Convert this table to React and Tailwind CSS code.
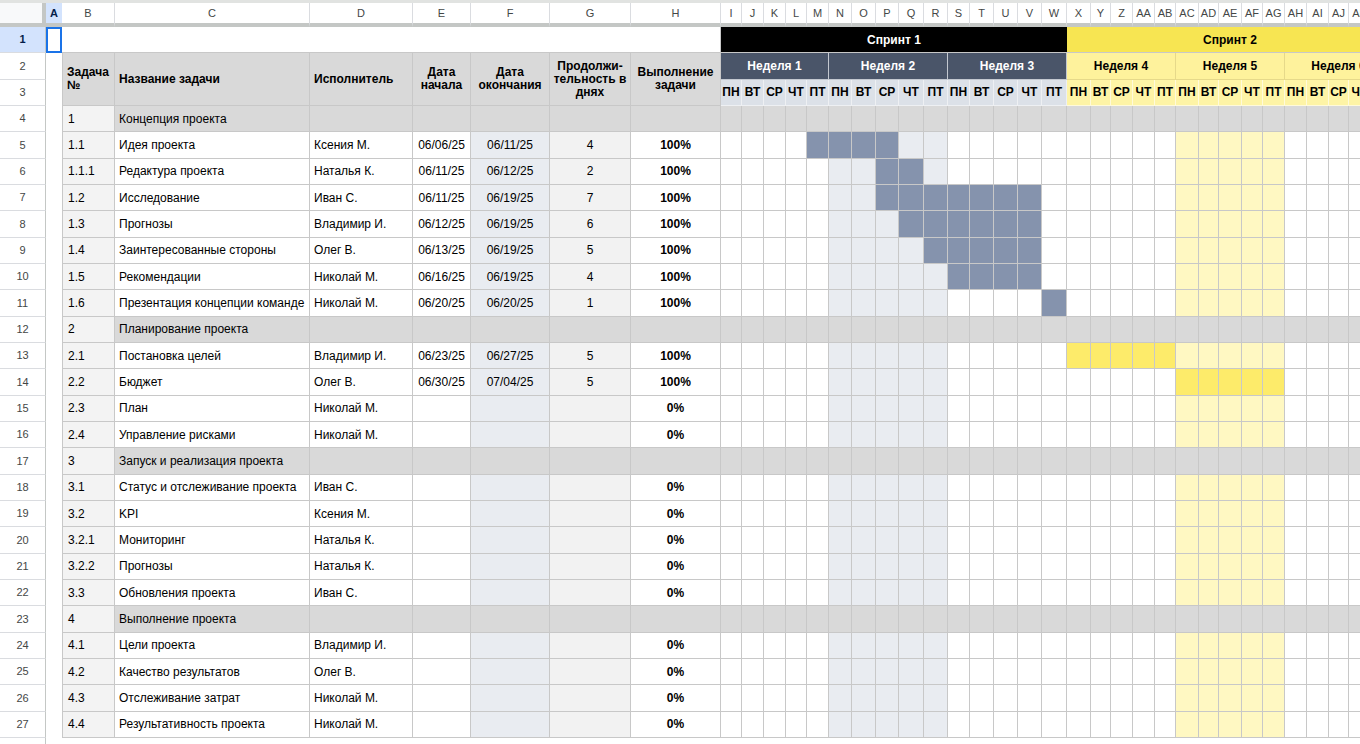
import React from "react";

// column letters for the gantt part (I .. AL)
const GANTT_LETTERS = [
  "I", "J", "K", "L", "M", "N", "O", "P", "Q", "R", "S", "T", "U", "V", "W",
  "X", "Y", "Z", "AA", "AB", "AC", "AD", "AE", "AF", "AG", "AH", "AI", "AJ", "AK", "AL",
];
const DAYS = ["ПН", "ВТ", "СР", "ЧТ", "ПТ"];

const tasks = [
  { id: "1", name: "Концепция проекта", section: true },
  { id: "1.1", name: "Идея проекта", who: "Ксения М.", start: "06/06/25", end: "06/11/25", dur: "4", pct: "100%", bar: [4, 7] },
  { id: "1.1.1", name: "Редактура проекта", who: "Наталья К.", start: "06/11/25", end: "06/12/25", dur: "2", pct: "100%", bar: [7, 8] },
  { id: "1.2", name: "Исследование", who: "Иван С.", start: "06/11/25", end: "06/19/25", dur: "7", pct: "100%", bar: [7, 13] },
  { id: "1.3", name: "Прогнозы", who: "Владимир И.", start: "06/12/25", end: "06/19/25", dur: "6", pct: "100%", bar: [8, 13] },
  { id: "1.4", name: "Заинтересованные стороны", who: "Олег В.", start: "06/13/25", end: "06/19/25", dur: "5", pct: "100%", bar: [9, 13] },
  { id: "1.5", name: "Рекомендации", who: "Николай М.", start: "06/16/25", end: "06/19/25", dur: "4", pct: "100%", bar: [10, 13] },
  { id: "1.6", name: "Презентация концепции команде", who: "Николай М.", start: "06/20/25", end: "06/20/25", dur: "1", pct: "100%", bar: [14, 14] },
  { id: "2", name: "Планирование проекта", section: true },
  { id: "2.1", name: "Постановка целей", who: "Владимир И.", start: "06/23/25", end: "06/27/25", dur: "5", pct: "100%", bar: [15, 19] },
  { id: "2.2", name: "Бюджет", who: "Олег В.", start: "06/30/25", end: "07/04/25", dur: "5", pct: "100%", bar: [20, 24] },
  { id: "2.3", name: "План", who: "Николай М.", pct: "0%" },
  { id: "2.4", name: "Управление рисками", who: "Николай М.", pct: "0%" },
  { id: "3", name: "Запуск и реализация проекта", section: true },
  { id: "3.1", name: "Статус и отслеживание проекта", who: "Иван С.", pct: "0%" },
  { id: "3.2", name: "KPI", who: "Ксения М.", pct: "0%" },
  { id: "3.2.1", name: "Мониторинг", who: "Наталья К.", pct: "0%" },
  { id: "3.2.2", name: "Прогнозы", who: "Наталья К.", pct: "0%" },
  { id: "3.3", name: "Обновления проекта", who: "Иван С.", pct: "0%" },
  { id: "4", name: "Выполнение проекта", section: true },
  { id: "4.1", name: "Цели проекта", who: "Владимир И.", pct: "0%" },
  { id: "4.2", name: "Качество результатов", who: "Олег В.", pct: "0%" },
  { id: "4.3", name: "Отслеживание затрат", who: "Николай М.", pct: "0%" },
  { id: "4.4", name: "Результативность проекта", who: "Николай М.", pct: "0%" },
];

const cell = "border-r border-b border-[#c8c8c8] flex items-center whitespace-nowrap overflow-hidden";

const RowNum = ({ n, active }) => (
  <div
    className={
      "flex items-center justify-center border-r border-b border-r-[#c4c7c5] border-b-[#dadce0] text-[11px] " +
      (active ? "bg-[#d3e3fd] text-[#041e49] font-bold" : "bg-white text-[#444746]")
    }
  >
    {n}
  </div>
);

const ganttBg = (t, i) => {
  if (t.section) return "bg-[#d9d9d9]";
  if (t.bar && i >= t.bar[0] && i <= t.bar[1]) return i < 15 ? "bg-[#8593ad]" : "bg-[#fdeb6a]";
  if (i >= 5 && i <= 9) return "bg-[#e9ecf1]";
  if (i >= 20 && i <= 24) return "bg-[#fff8c2]";
  return "bg-white";
};

const TaskRow = ({ t, n }) => {
  const bg = t.section ? "bg-[#d9d9d9]" : "";
  return (
    <>
      <RowNum n={n} />
      <div className="bg-white" />
      <div className={cell + " border-l bg-[#f3f3f3] pl-[5px]"}>{t.id}</div>
      <div className={cell + " pl-[4px] " + (bg || "bg-white")}>{t.name}</div>
      <div className={cell + " pl-[4px] " + (bg || "bg-white")}>{t.who}</div>
      <div className={cell + " justify-center " + (bg || "bg-white")}>{t.start}</div>
      <div className={cell + " justify-center " + (bg || "bg-[#e9ecf1]")}>{t.end}</div>
      <div className={cell + " justify-center " + (bg || "bg-[#f2f2f2]")}>{t.dur}</div>
      <div className={cell + " justify-center font-bold " + (bg || "bg-white")}>{t.pct}</div>
      {GANTT_LETTERS.map((l, i) => (
        <div key={l} className={"border-r border-b border-[#c8c8c8] " + ganttBg(t, i)} />
      ))}
    </>
  );
};

export default function App() {
  const weeks = ["Неделя 1", "Неделя 2", "Неделя 3", "Неделя 4", "Неделя 5", "Неделя 6"];
  return (
    <div className="w-[1360px] h-[744px] overflow-hidden bg-white font-['Liberation_Sans',Arial,sans-serif] text-[12px] text-black">
      <div className="h-[3px] bg-[#e1e3e1]" />
      <div className="grid w-max grid-cols-[46px_16px_53px_195px_103px_58px_79px_81px_90px_21px_22px_22px_21px_22px_23px_24px_23px_25px_24px_22px_24px_24px_24px_25px_24px_20px_22px_22px_21px_23px_20px_23px_21px_22px_22px_22px_20px_22px_22px] grid-rows-[24px_repeat(28,26.33px)]">
        {/* column letters */}
        <div className="bg-[#f8f9fa] border-r-4 border-b-4 border-[#c4c7c5]" />
        <div className="flex items-center justify-center bg-[#d3e3fd] border-b-4 border-[#c4c7c5] font-bold text-[11px] text-[#041e49]">
          A
        </div>
        {["B", "C", "D", "E", "F", "G", "H", ...GANTT_LETTERS].map((l) => (
          <div
            key={l}
            className="flex items-center justify-center bg-white border-r border-b-4 border-r-[#dadce0] border-b-[#c4c7c5] text-[11px] text-[#444746]"
          >
            {l}
          </div>
        ))}

        {/* row 1: sprints */}
        <RowNum n="1" active />
        <div className="border-2 border-[#1a73e8] bg-white" />
        <div className="col-span-7 bg-white border-r border-b border-[#c8c8c8]" />
        <div className="col-span-15 flex items-center justify-center bg-black text-white font-bold border-b border-[#c8c8c8]">
          Спринт 1
        </div>
        <div className="col-span-15 flex items-center justify-center bg-[#f7e552] font-bold border-b border-[#c8c8c8]">
          Спринт 2
        </div>

        {/* rows 2-3: headers */}
        <RowNum n="2" />
        <div className="bg-white" />
        <div className="row-span-2 flex items-center bg-[#d9d9d9] border-l border-r border-b border-[#c8c8c8] pl-[4px] font-bold leading-[13px]">
          Задача
          <br />№
        </div>
        <div className="row-span-2 flex items-center bg-[#d9d9d9] border-r border-b border-[#c8c8c8] pl-[4px] font-bold">
          Название задачи
        </div>
        <div className="row-span-2 flex items-center bg-[#d9d9d9] border-r border-b border-[#c8c8c8] pl-[4px] font-bold">
          Исполнитель
        </div>
        <div className="row-span-2 flex items-center justify-center text-center bg-[#d9d9d9] border-r border-b border-[#c8c8c8] font-bold leading-[13px]">
          Дата
          <br />
          начала
        </div>
        <div className="row-span-2 flex items-center justify-center text-center bg-[#d9d9d9] border-r border-b border-[#c8c8c8] font-bold leading-[13px]">
          Дата
          <br />
          окончания
        </div>
        <div className="row-span-2 flex items-center justify-center text-center bg-[#d9d9d9] border-r border-b border-[#c8c8c8] font-bold leading-[13px]">
          Продолжи-
          <br />
          тельность в
          <br />
          днях
        </div>
        <div className="row-span-2 flex items-center justify-center text-center bg-[#d9d9d9] border-r border-b border-[#c8c8c8] font-bold leading-[13px]">
          Выполнение
          <br />
          задачи
        </div>
        {weeks.map((w, i) => (
          <div
            key={w}
            className={
              "col-span-5 flex items-center justify-center font-bold whitespace-nowrap border-b " +
              (i < 3
                ? "bg-[#4a5569] text-white border-r border-[#c3c8d0]"
                : "bg-[#fef29c] border-r border-[#e6d98a]")
            }
          >
            {w}
          </div>
        ))}

        <RowNum n="3" />
        <div className="bg-white" />
        {GANTT_LETTERS.map((l, i) => (
          <div
            key={l}
            className={
              "flex items-center justify-center font-bold border-b border-r " +
              (i < 15 ? "bg-[#dce1e8] border-[#eef0f3]" : "bg-[#fef4a6] border-[#fffadb]")
            }
          >
            {DAYS[i % 5]}
          </div>
        ))}

        {/* task rows 4-27 */}
        {tasks.map((t, i) => (
          <TaskRow key={t.id + i} t={t} n={String(i + 4)} />
        ))}

        {/* row 28, cut by the window */}
        <RowNum n="28" />
      </div>
    </div>
  );
}
